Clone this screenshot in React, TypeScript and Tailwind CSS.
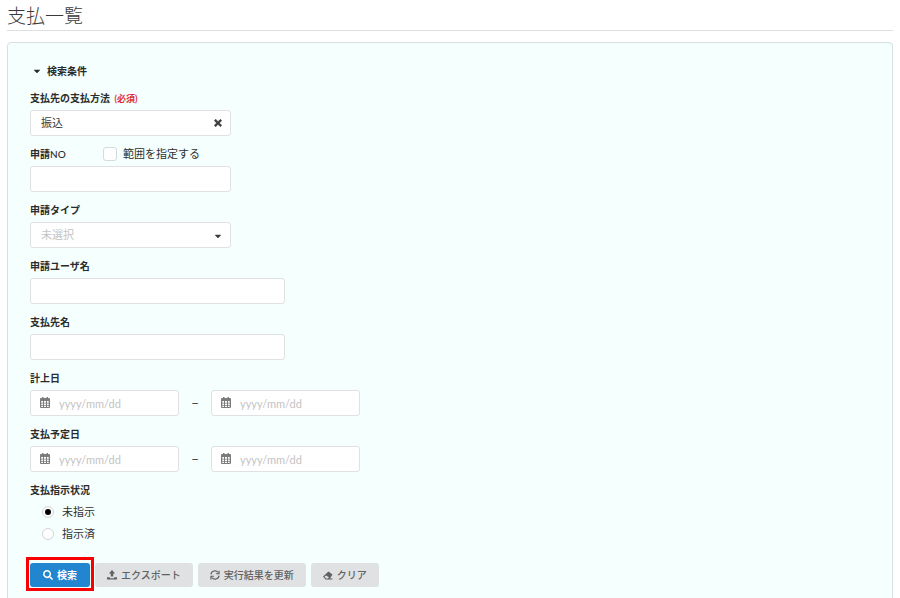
import { useId, useState } from "react";
import type { ReactNode } from "react";
import { FaCaretDown, FaSearch, FaTimes } from "react-icons/fa";

const control =
  "block h-[26px] rounded-[3px] border border-[#dfe1e2] bg-white text-[11px] text-[#3c3c3c] outline-none placeholder:text-[#c3c3c3]";
const buttonBase =
  "flex h-6 items-center gap-1 rounded-[3px] bg-[#e0e1e2] px-3 text-[10px] font-medium text-[#606162]";

function Label({ htmlFor, children }: { htmlFor?: string; children: ReactNode }) {
  return (
    <label htmlFor={htmlFor} className="block h-4 text-[10px] leading-4 font-bold text-[#2a2c2c]">
      {children}
    </label>
  );
}

function Field({ id, label, children }: { id?: string; label: ReactNode; children: ReactNode }) {
  return (
    <div className="flex flex-col items-start gap-1">
      <Label htmlFor={id}>{label}</Label>
      {children}
    </div>
  );
}

function CalendarIcon({ className }: { className: string }) {
  return (
    <svg viewBox="0 0 20 22" className={className} fill="currentColor" aria-hidden="true">
      <path
        fillRule="evenodd"
        d="M4 0H7V2H13V0H16V2H18Q20 2 20 4V20Q20 22 18 22H2Q0 22 0 20V4Q0 2 2 2H4ZM2.500 8V11.500H6V8ZM8 8V11.500H12V8ZM14 8V11.500H17.500V8ZM2.500 13V16H6V13ZM8 13V16H12V13ZM14 13V16H17.500V13ZM2.500 17.500V20H6V17.500ZM8 17.500V20H12V17.500ZM14 17.500V20H17.500V17.500Z"
      />
    </svg>
  );
}

function UploadIcon() {
  return (
    <svg viewBox="0 0 16 16" className="size-[10px]" fill="currentColor" aria-hidden="true">
      <path d="M8 0 13 5.500H10V10.500H6V5.500H3ZM0 11.500H4.500V13H11.500V11.500H16V15H0Z" />
    </svg>
  );
}

function RefreshIcon() {
  return (
    <svg
      viewBox="0 0 16 16"
      className="size-[10px]"
      fill="none"
      stroke="currentColor"
      strokeWidth="1.900"
      aria-hidden="true"
    >
      <path d="M1.500 7A6.400 6.400 0 0 1 13 4M14.500 9A6.400 6.400 0 0 1 3 12" />
      <path d="M14.500 1V6H9.500M1.500 15V10H6.500" />
    </svg>
  );
}

function EraserIcon() {
  return (
    <svg viewBox="0 0 20 18" className="h-[9px] w-[10px]" fill="currentColor" aria-hidden="true">
      <path
        fillRule="evenodd"
        d="M11 1 19 7 14 15H19V17H5L0 11ZM6 9 3 11.500 6 15H9.500L12 12.500Z"
      />
    </svg>
  );
}

function DateInput({ id, label }: { id: string; label: string }) {
  return (
    <div className="relative">
      <CalendarIcon className="absolute top-[7px] left-[10px] h-[11px] w-[10px] text-[#7c7c7c]" />
      <input
        id={id}
        type="text"
        aria-label={label}
        placeholder="yyyy/mm/dd"
        className={`${control} w-[149px] pr-2 pl-7`}
      />
    </div>
  );
}

function DateRange({ label }: { label: string }) {
  const id = useId();
  return (
    <Field id={id} label={label}>
      <div className="flex items-center">
        <DateInput id={id} label={`${label} 開始`} />
        <span className="w-8 text-center text-[14px] leading-4 text-[#3c3c3c]">–</span>
        <DateInput id={`${id}-end`} label={`${label} 終了`} />
      </div>
    </Field>
  );
}

function StatusRadio({ value, defaultChecked }: { value: string; defaultChecked?: boolean }) {
  return (
    <label className="flex h-[22px] items-center gap-2 text-[11px] text-[#2f3131]">
      <input
        type="radio"
        name="status"
        value={value}
        defaultChecked={defaultChecked}
        className="grid size-3 appearance-none place-items-center rounded-full border border-[#d2d6d6] bg-white before:size-[6px] before:rounded-full checked:before:bg-black"
      />
      {value}
    </label>
  );
}

export default function App() {
  const [method, setMethod] = useState("振込");
  const [open, setOpen] = useState(true);

  return (
    <div className="flex h-screen flex-col overflow-hidden bg-white px-[7px] font-['Lato','Noto_Sans_CJK_JP',sans-serif]">
      <h1 className="h-[31px] shrink-0 border-b border-[#dedfdf] text-[19px] leading-[31px] font-light text-[#3a3a3a]">
        支払一覧
      </h1>
      <main className="mt-[11px] shrink-0 rounded-[4px] border border-[#d6e0e0] bg-[#f5fffe] px-[22px] pt-5 pb-10">
        <button
          type="button"
          aria-expanded={open}
          onClick={() => setOpen(!open)}
          className="flex h-4 items-center gap-[5px] pl-[2px] text-[10px] leading-4 font-bold text-[#2a2c2c]"
        >
          <FaCaretDown className="size-[10px]" />
          検索条件
        </button>

        {open && (
          <form className="mt-[11px] flex flex-col gap-[10px]" onSubmit={(e) => e.preventDefault()}>
            <Field
              id="method"
              label={
                <>
                  支払先の支払方法 <span className="ml-[2px] text-[9px] text-[#e03030]">(必須)</span>
                </>
              }
            >
              <div className="relative">
                <select
                  id="method"
                  value={method}
                  onChange={(e) => setMethod(e.target.value)}
                  className={`${control} w-[201px] appearance-none px-[10px]`}
                >
                  <option value=""></option>
                  <option>振込</option>
                </select>
                <button
                  type="button"
                  aria-label="選択を解除"
                  onClick={() => setMethod("")}
                  className="absolute top-2 right-2 text-[#3c3c3c]"
                >
                  <FaTimes className="size-[10px] stroke-current stroke-[40px]" />
                </button>
              </div>
            </Field>

            <div className="flex flex-col items-start gap-1">
              <div className="flex h-4 items-center">
                <div className="w-[73px]">
                  <Label htmlFor="number">
                    申請<span className="font-medium">NO</span>
                  </Label>
                </div>
                <label className="flex items-center gap-[6px] text-[11px] leading-4 text-[#2f3131]">
                  <input
                    type="checkbox"
                    className="size-[14px] appearance-none rounded-[3px] border border-[#d6dada] bg-white checked:bg-[#2185d0]"
                  />
                  範囲を指定する
                </label>
              </div>
              <input id="number" type="text" className={`${control} w-[201px] px-[10px]`} />
            </div>

            <Field id="type" label="申請タイプ">
              <div className="relative">
                <select
                  id="type"
                  className={`${control} w-[201px] appearance-none px-[10px] text-[#c3c3c3]!`}
                >
                  <option>未選択</option>
                </select>
                <FaCaretDown className="pointer-events-none absolute top-[9px] right-2 size-[10px] text-[#3c3c3c]" />
              </div>
            </Field>

            <Field id="user" label="申請ユーザ名">
              <input id="user" type="text" className={`${control} w-[255px] px-[10px]`} />
            </Field>

            <Field id="payee" label="支払先名">
              <input id="payee" type="text" className={`${control} w-[255px] px-[10px]`} />
            </Field>

            <DateRange label="計上日" />
            <DateRange label="支払予定日" />

            <fieldset>
              <legend className="h-4 text-[10px] leading-4 font-bold text-[#2a2c2c]">
                支払指示状況
              </legend>
              <div className="pt-[3px] pl-3">
                <StatusRadio value="未指示" defaultChecked />
                <StatusRadio value="指示済" />
              </div>
            </fieldset>

            <div className="mt-2 flex gap-[5px]">
              <div className="relative">
                <button
                  type="submit"
                  className="flex h-6 w-[60px] items-center justify-center gap-1 rounded-[3px] bg-[#2185d0] text-[10px] font-bold text-white"
                >
                  <FaSearch className="size-[10px]" />
                  検索
                </button>
                <span className="pointer-events-none absolute -inset-x-1 -top-[6px] -bottom-1 border-[3px] border-[#fa0000]" />
              </div>
              <button type="button" className={buttonBase}>
                <UploadIcon />
                エクスポート
              </button>
              <button type="button" className={buttonBase}>
                <RefreshIcon />
                実行結果を更新
              </button>
              <button type="button" className={buttonBase}>
                <EraserIcon />
                クリア
              </button>
            </div>
          </form>
        )}
      </main>
    </div>
  );
}
